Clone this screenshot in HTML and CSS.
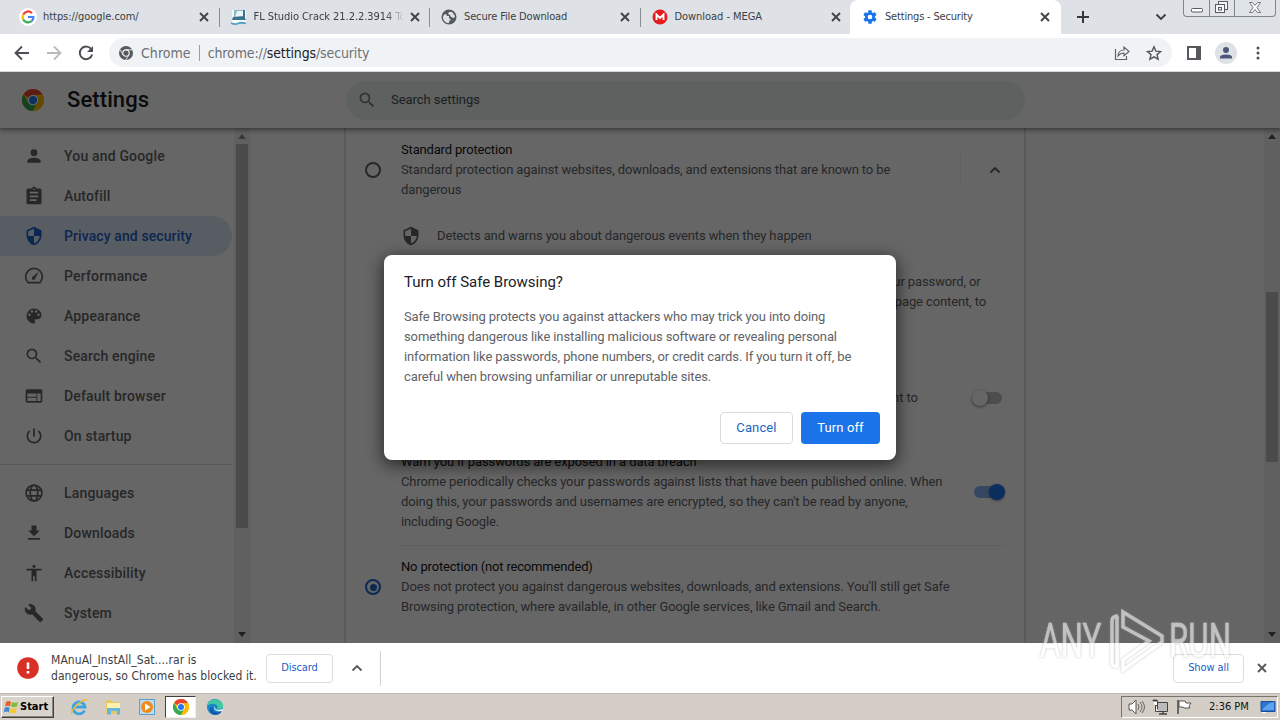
FILE: index.html
```html
<!DOCTYPE html>
<html lang="en">
<head>
<meta charset="utf-8">
<title>Settings - Security</title>
<link rel="stylesheet" href="styles.css">
</head>
<body>
<svg class="defs" width="0" height="0">
  <symbol id="close" viewBox="0 0 10 10"><path d="M1 1l8 8M9 1l-8 8" fill="none" stroke="currentColor" stroke-width="1.9"/></symbol>
  <symbol id="chrome" viewBox="0 0 24 24"><circle cx="12" cy="12" r="12" fill="#fbbc05"/><path d="M12 12L1.6 6A12 12 0 0 1 22.4 6L12 6.6z" fill="#ea4335"/><path d="M1.6 6A12 12 0 0 0 12 24l5-9.2-5-2.8-5.2 3z" fill="#34a853"/><path d="M12 6.5h10.7A12 12 0 0 1 12 24l4.8-9z" fill="#fbbc05"/><circle cx="12" cy="12" r="5.7" fill="#fff"/><circle cx="12" cy="12" r="4.5" fill="#2878ed"/></symbol>
  <symbol id="search" viewBox="0 0 24 24"><path d="M15.5 14h-.79l-.28-.27A6.47 6.47 0 0 0 16 9.5 6.5 6.5 0 1 0 9.5 16c1.61 0 3.09-.59 4.23-1.57l.27.28v.79l5 4.99L20.49 19l-4.99-5zm-6 0C7.01 14 5 11.99 5 9.5S7.01 5 9.5 5 14 7.01 14 9.5 11.99 14 9.5 14z"/></symbol>
  <symbol id="shield" viewBox="0 0 24 24"><path d="M12 1L3 5v6c0 5.55 3.84 10.74 9 12 5.16-1.26 9-6.45 9-12V5l-9-4zm0 10.99h7c-.53 4.12-3.28 7.79-7 8.94V12H5V6.3l7-3.11v8.8z"/></symbol>
  <symbol id="up" viewBox="0 0 12 8"><path d="M1.5 6.5L6 2l4.500 4.500" fill="none" stroke="currentColor" stroke-width="1.800"/></symbol>
</svg>

<header class="tabs">
  <div class="tab"><svg class="fav" viewBox="0 0 18 18"><circle cx="9" cy="9" r="9" fill="#fff"/><g fill="none" stroke-width="2.200"><path d="M13 5.200A5.400 5.400 0 0 0 4.200 6.500" stroke="#ea4335"/><path d="M4.200 6.500a5.400 5.400 0 0 0 0 5" stroke="#fbbc05"/><path d="M4.200 11.500a5.400 5.400 0 0 0 8.500 1.500" stroke="#34a853"/><path d="M12.700 13a5.400 5.400 0 0 0 1.700-4H9" stroke="#4285f4"/></g></svg><span class="title t1">https://google.com/</span><svg class="x"><use href="#close"/></svg></div>
  <div class="tab sep"><svg class="fav" viewBox="0 0 18 18"><path d="M2 2h14v13H2z" fill="#f5fafc"/><path d="M4 2h11v8H4z" fill="#8cb9c9"/><path d="M7 3h7v6H5z" fill="#e7f4fa"/><path d="M13 2h2v9h-2zM3 9l11-1 2 4H2z" fill="#3c718b"/><path d="M1 15q4 2 7 .5t8 0" fill="none" stroke="#54a1bb" stroke-width="1.800"/></svg><span class="title t2">FL Studio Crack 21.2.2.3914 To</span><svg class="x"><use href="#close"/></svg></div>
  <div class="tab sep"><svg class="fav" viewBox="0 0 18 18"><circle cx="9" cy="9" r="7.500" fill="#555a60"/><path d="M3 9c0-2 2-3 3-3l1 2h2v2l2 2-2 1v2c-3 0-6-2-6-6zM9 4h3l3 4-1 2-3-1-1-2-2-1z" fill="#dee1e6"/></svg><span class="title t3">Secure File Download</span><svg class="x"><use href="#close"/></svg></div>
  <div class="tab sep"><svg class="fav" viewBox="0 0 18 18"><circle cx="9" cy="9" r="7.500" fill="#e51c20"/><path d="M5.500 12V6.500L9 10l3.500-3.500V12" fill="none" stroke="#fff" stroke-width="1.900"/></svg><span class="title t4">Download - MEGA</span><svg class="x"><use href="#close"/></svg></div>
  <div class="tab active"><svg class="fav blue" viewBox="0 0 24 24"><path fill="#1a73e8" d="M19.430 12.980c.04-.32.07-.64.07-.98s-.03-.66-.07-.98l2.110-1.650c.19-.15.24-.42.12-.64l-2-3.460c-.12-.22-.39-.3-.61-.22l-2.490 1c-.52-.4-1.080-.73-1.690-.98l-.38-2.650A.49.49 0 0 0 14 2h-4c-.25 0-.46.18-.49.42l-.38 2.650c-.61.25-1.170.59-1.690.98l-2.490-1c-.23-.09-.49 0-.61.22l-2 3.460c-.13.22-.07.49.12.64l2.110 1.650c-.04.32-.07.65-.07.98s.03.66.07.98l-2.110 1.650c-.19.15-.24.42-.12.64l2 3.460c.12.22.39.3.61.22l2.490-1c.52.4 1.080.73 1.690.98l.38 2.650c.03.24.24.42.49.42h4c.25 0 .46-.18.49-.42l.38-2.650c.61-.25 1.170-.59 1.690-.98l2.490 1c.23.09.49 0 .61-.22l2-3.460c.12-.22.07-.49-.12-.64l-2.110-1.650zM12 15.500a3.500 3.500 0 1 1 0-7 3.500 3.500 0 0 1 0 7z"/></svg><span class="title t5">Settings - Security</span><svg class="x"><use href="#close"/></svg></div>
  <svg class="plus" viewBox="0 0 12 12"><path d="M6 0v12M0 6h12" stroke="#35383c" stroke-width="2"/></svg>
  <svg class="tabsearch" viewBox="0 0 12 8"><path d="M1.500 1.500L6 6l4.500-4.500" fill="none" stroke="#3c4043" stroke-width="1.900"/></svg>
  <div class="winbtns">
    <span class="wb w1"><svg width="25" height="15"><rect x="7.500" y="8.500" width="11" height="3.500" rx="1" fill="#fff" stroke="#555b66"/></svg></span>
    <span class="wb w2"><svg width="24" height="15"><g fill="#f4f5f7" stroke="#555b66"><rect x="8.500" y="1.500" width="9" height="8"/><rect x="5.500" y="4.500" width="9" height="8"/><rect x="8.500" y="7.500" width="3" height="2.500"/></g></svg></span>
    <span class="wb w3"><svg width="40" height="15"><path d="M14.500 2.500h3l2.500 3 2.500-3h3l-3.500 5 3.500 5h-3l-2.500-3-2.500 3h-3l3.500-5z" fill="#fff" stroke="#70757e"/></svg></span>
  </div>
</header>

<div class="toolbar">
  <svg class="nav" viewBox="0 0 16 16"><path d="M15 8H2M8 1.500L1.500 8 8 14.500" fill="none" stroke="#4b4f54" stroke-width="1.800"/></svg>
  <svg class="nav" viewBox="0 0 16 16"><path d="M1 8h13M8 1.500L14.500 8 8 14.500" fill="none" stroke="#b8babd" stroke-width="1.800"/></svg>
  <svg class="nav" viewBox="0 0 16 16"><path d="M13.500 4.600A6.300 6.300 0 1 0 14.200 9.500" fill="none" stroke="#4b4f54" stroke-width="1.900"/><path d="M15 1v6H9z" fill="#4b4f54"/></svg>
  <div class="omnibox">
    <svg class="cmono" viewBox="0 0 24 24"><circle cx="12" cy="12" r="12" fill="#565a5f"/><circle cx="12" cy="12" r="5.500" fill="none" stroke="#f1f3f4" stroke-width="2"/><path d="M12 6.500h11M7 15L1.800 6M17 15l-5.500 9" stroke="#f1f3f4" stroke-width="1.500"/></svg>
    <span class="scheme">Chrome</span><i class="pipe"></i><span class="url">chrome://<b>settings</b>/security</span>
    <svg class="share" viewBox="0 0 16 16"><path d="M1.500 4v10.500h11V11M4 11c0-4 3-6 6-6V2l5 4.500-5 4.300V8C7.500 8 5.500 9 4 11z" fill="none" stroke="#5f6368" stroke-width="1.200"/></svg>
    <svg class="star" viewBox="0 0 16 16"><path d="M8 1.800l1.900 4.300 4.700.4-3.600 3.100 1.100 4.600L8 11.800l-4.100 2.400L5 9.600 1.400 6.500l4.700-.4z" fill="none" stroke="#54585d" stroke-width="1.400"/></svg>
  </div>
  <svg class="panel" viewBox="0 0 14 14"><path d="M1 1h12v12H1z" fill="none" stroke="#55585d" stroke-width="2"/><path d="M9 1h4v12H9z" fill="#55585d"/></svg>
  <span class="avatar"><svg viewBox="0 0 14 14"><circle cx="7" cy="4" r="3" fill="#4b587c"/><path d="M1 12.500V11q0-2.500 6-2.500T13 11v1.500z" fill="#4b587c"/></svg></span>
  <svg class="dots" viewBox="0 0 4 14"><g fill="#4b4f54"><circle cx="2" cy="2" r="1.500"/><circle cx="2" cy="7" r="1.500"/><circle cx="2" cy="12" r="1.500"/></g></svg>
</div>

<div class="page">
  <div class="head">
    <svg class="logo"><use href="#chrome"/></svg><h1>Settings</h1>
    <div class="searchbar"><svg viewBox="0 0 24 24"><use href="#search"/></svg><span>Search settings</span></div>
  </div>
  <div class="body">
    <nav class="side">
      <a><svg viewBox="0 0 24 24"><path d="M12 12a4 4 0 1 0 0-8 4 4 0 0 0 0 8zm0 2c-2.670 0-8 1.340-8 4v2h16v-2c0-2.660-5.330-4-8-4z"/></svg><span>You and Google</span></a>
      <a><svg viewBox="0 0 24 24"><path d="M19 3h-4.180C14.400 1.840 13.300 1 12 1s-2.400.84-2.820 2H5a2 2 0 0 0-2 2v15a2 2 0 0 0 2 2h14a2 2 0 0 0 2-2V5a2 2 0 0 0-2-2zm-7 0a1 1 0 1 1 0 2 1 1 0 0 1 0-2zm3 15H7v-2h8v2zm2-4.500H7v-2h10v2zM17 9H7V7h10v2z"/></svg><span>Autofill</span></a>
      <a class="sel"><svg><use href="#shield"/></svg><span>Privacy and security</span></a>
      <a><svg viewBox="0 0 24 24"><path d="M5 20a10 10 0 1 1 14 0z" fill="none" stroke="#5f6368" stroke-width="2"/><path d="M17.500 7l-4 8a2 2 0 1 1-3-2z"/></svg><span>Performance</span></a>
      <a><svg viewBox="0 0 24 24"><path d="M12 3a9 9 0 0 0 0 18c.83 0 1.500-.67 1.500-1.500 0-.39-.15-.74-.39-1.010-.23-.26-.38-.61-.38-.99 0-.83.67-1.500 1.500-1.500H16a5 5 0 0 0 5-5c0-4.420-4.030-8-9-8zM6.500 12a1.500 1.500 0 1 1 0-3 1.500 1.500 0 0 1 0 3zm3-4a1.500 1.500 0 1 1 0-3 1.500 1.500 0 0 1 0 3zm5 0a1.500 1.500 0 1 1 0-3 1.500 1.500 0 0 1 0 3zm3 4a1.500 1.500 0 1 1 0-3 1.500 1.500 0 0 1 0 3z"/></svg><span>Appearance</span></a>
      <a><svg><use href="#search"/></svg><span>Search engine</span></a>
      <a><svg viewBox="0 0 24 24"><path d="M20 4H4a2 2 0 0 0-2 2v12a2 2 0 0 0 2 2h16a2 2 0 0 0 2-2V6a2 2 0 0 0-2-2zm-5 14H4v-4h11v4zm0-5H4V9h11v4zm5 5h-4V9h4v9z"/></svg><span>Default browser</span></a>
      <a><svg viewBox="0 0 24 24"><path d="M13 3h-2v10h2V3zm4.830 2.170l-1.420 1.420A6.990 6.990 0 1 1 7.580 6.580L6.170 5.170A9 9 0 1 0 17.830 5.170z"/></svg><span>On startup</span></a>
      <hr>
      <a><svg viewBox="0 0 24 24"><g fill="none" stroke="#5f6368" stroke-width="2"><circle cx="12" cy="12" r="9.500"/><ellipse cx="12" cy="12" rx="4.500" ry="9.500"/><path d="M3 8.500h18M3 15.500h18"/></g></svg><span>Languages</span></a>
      <a><svg viewBox="0 0 24 24"><path d="M19 9h-4V3H9v6H5l7 7 7-7zM5 18v2h14v-2H5z"/></svg><span>Downloads</span></a>
      <a><svg viewBox="0 0 24 24"><path d="M12 2a2 2 0 1 1 0 4 2 2 0 0 1 0-4zm9 7h-6v13h-2v-6h-2v6H9V9H3V7h18v2z"/></svg><span>Accessibility</span></a>
      <a><svg viewBox="0 0 24 24"><path d="M22.700 19l-9.100-9.100c.9-2.300.4-5-1.500-6.900-2-2-5-2.400-7.400-1.300L9 6 6 9 1.600 4.700C.4 7.100.9 10.100 2.900 12.100c1.900 1.900 4.600 2.400 6.900 1.500l9.100 9.100c.4.4 1 .4 1.400 0l2.300-2.300c.5-.4.5-1.100.1-1.400z"/></svg><span>System</span></a>
    </nav>
    <div class="sbar sbar-side"><i class="arrow"></i><i class="thumb"></i><i class="arrow down"></i></div>
    <main>
      <section class="card">
        <div class="option first">
          <i class="radio"></i>
          <div class="text"><strong>Standard protection</strong><span>Standard protection against websites, downloads, and extensions that are known to be</span><span>dangerous</span></div>
          <div class="expander"><svg><use href="#up"/></svg></div>
        </div>
        <div class="bullet"><svg><use href="#shield"/></svg><div class="text"><span>Detects and warns you about dangerous events when they happen</span></div></div>
        <div class="bullet two"><svg><use href="#search"/></svg><div class="text"><span>Checks URLs with a list of unsafe sites stored in Chrome. If a site tries to steal your password, or</span><span>when you download a harmful file, Chrome may also send URLs, including bits of page content, to</span><span>Safe Browsing</span></div></div>
        <div class="setting help"><div class="text"><strong>Help improve security on the web for everyone</strong><span>Sends URLs of some pages you visit, limited system information, and some page content to</span><span>Google, to help discover new threats and protect everyone on the web.</span></div><i class="toggle"></i></div>
        <div class="setting warn"><div class="text"><strong class="long">Warn you if passwords are exposed in a data breach</strong><span>Chrome periodically checks your passwords against lists that have been published online. When</span><span>doing this, your passwords and usernames are encrypted, so they can't be read by anyone,</span><span>including Google.</span></div><i class="toggle on"></i></div>
        <div class="option last">
          <i class="radio on"></i>
          <div class="text"><strong>No protection (not recommended)</strong><span>Does not protect you against dangerous websites, downloads, and extensions. You'll still get Safe</span><span>Browsing protection, where available, in other Google services, like Gmail and Search.</span></div>
        </div>
      </section>
    </main>
    <div class="sbar sbar-main"><i class="arrow"></i><i class="thumb"></i><i class="arrow down"></i></div>
  </div>
  <div class="scrim">
    <div class="dialog">
      <h2>Turn off Safe Browsing?</h2>
      <p><span>Safe Browsing protects you against attackers who may trick you into doing</span><span>something dangerous like installing malicious software or revealing personal</span><span>information like passwords, phone numbers, or credit cards. If you turn it off, be</span><span>careful when browsing unfamiliar or unreputable sites.</span></p>
      <div class="actions"><button class="cancel">Cancel</button><button class="primary">Turn off</button></div>
    </div>
  </div>
</div>

<div class="shelf">
  <svg class="warnicon" viewBox="0 0 22 22"><circle cx="11" cy="11" r="10.800" fill="#d93025"/><path d="M11 5.500v6.500M11 14v2.500" stroke="#fff" stroke-width="2.600"/></svg>
  <div class="msg"><span>MAnuAl_InstAll_Sat....rar is</span><span>dangerous, so Chrome has blocked it.</span></div>
  <button class="discard">Discard</button>
  <svg class="more"><use href="#up"/></svg>
  <i class="rule"></i>
  <button class="showall">Show all</button>
  <svg class="shut"><use href="#close"/></svg>
</div>

<footer class="taskbar">
  <button class="start"><svg viewBox="0 0 16 16"><path d="M3 3q3-2 5 0L7 7.500Q5 6 2 7.500z" fill="#e8622c"/><path d="M9 3q3 1.500 6 0l-1 4.500q-3 1.500-6 0z" fill="#7ebc3b"/><path d="M1.700 9q3-2 5 0l-1 4.500q-2-2-5 0z" fill="#418bd0"/><path d="M7.700 9q3 1.500 6 0l-1 4.500q-3 1.500-6 0z" fill="#f8c72c"/></svg><span>Start</span></button>
  <svg class="app" viewBox="0 0 18 18"><path d="M14.500 12.500A6 6 0 1 1 15 9H4" fill="none" stroke="#3aa5e0" stroke-width="2.800"/><path d="M2 16C-1 13 13 0 17 2" fill="none" stroke="#e9bd35" stroke-width="1.500"/></svg>
  <svg class="app" viewBox="0 0 18 18"><path d="M2 2h5l1 2h7v12H2z" fill="#e8c768"/><path d="M3 5h13v6H3z" fill="#fff0b0"/><path d="M3 16.500V10h13v6.500h-3V13H7v3.500z" fill="#67b6de"/></svg>
  <svg class="app" viewBox="0 0 18 18"><path d="M1.500 1.500h15v15h-15z" fill="#b9dcf2" stroke="#5b9ccd"/><circle cx="9" cy="9" r="6" fill="#f18b1a"/><path d="M7 5.500L12.500 9 7 12.500z" fill="#fff"/></svg>
  <span class="pressed"><svg><use href="#chrome"/></svg></span>
  <svg class="app edge" viewBox="0 0 18 18"><circle cx="9" cy="9" r="8" fill="#1687c9"/><path d="M1 8C2 0 15-1 17 7c1 5-5 5-6 3 2-4-5-6-10-2z" fill="#40c8a0"/><path d="M7 9c-2 5 4 7 9 4-2 4-8 5-11 2-3-4 0-6 2-6z" fill="#1259a8"/><path d="M9 8c-1 3 2 5 8 3v2c-5 1-11-1-8-5z" fill="#e7eef2"/></svg>
  <div class="tray">
    <svg class="ti" viewBox="0 0 18 18"><path d="M2 6h3l4-4v14l-4-4H2z" fill="#fff" stroke="#555"/><path d="M11 6q2 3 0 6M13 4q4 5 0 10M15 3q5 6 0 12" fill="none" stroke="#666"/></svg>
    <svg class="ti" viewBox="0 0 18 18"><path d="M6.500 4.500h10v9h-10z" fill="#bbb" stroke="#444"/><path d="M8 16h8M12 14v2" stroke="#444" stroke-width="1.500"/><path d="M1.500 2.500h5v5h-2v6h3" fill="#fff" stroke="#444"/><path d="M3 1v3M5 1v3" stroke="#444"/></svg>
    <svg class="ti" viewBox="0 0 18 18"><path d="M3 2v14" stroke="#444" stroke-width="1.500"/><path d="M4 3h6l1 2h5l-2 3 1 2H9L8 9H4z" fill="#fff" stroke="#555"/></svg>
    <span class="clock">2:36 PM</span>
    <svg class="desk" viewBox="0 0 16 14"><path d="M1 1.500h14v10H1z" fill="#2b75d2" stroke="#1e4f96"/><path d="M2 10Q7 3 14 2v8z" fill="#5da2ec"/><path d="M2 12.500h4" stroke="#fff"/></svg>
  </div>
</footer>

<div class="watermark"><span>ANY</span><svg viewBox="0 0 60 64"><g fill="none" stroke="#fff" stroke-width="3.500"><path d="M14 3L53 27v6L14 61V51L40 32 14 18z"/><path d="M9 7Q3 7 3 12v42q0 4 5 3V7"/></g></svg><span class="run">RUN</span></div>
</body>
</html>
```
FILE: styles.css
```css
* { box-sizing: border-box; }
body { margin: 0; width: 1280px; height: 720px; overflow: hidden; display: flex; flex-direction: column; position: relative; background: #fff; font: 12px/16px "DejaVu Sans Condensed", "DejaVu Sans", sans-serif; font-stretch: condensed; color: #3c4043; }
svg { display: block; flex: none; }
.defs { position: absolute; }
button { font: inherit; padding: 0; margin: 0; }

.tabs { height: 34px; flex: none; background: #dee1e6; display: flex; align-items: center; }
.tab { width: 210.500px; flex: none; height: 34px; display: flex; align-items: center; padding: 0 1.500px 0 19px; position: relative; font-size: 11px; }
.tab.sep::before { content: ""; position: absolute; left: 8px; top: 8px; width: 1px; height: 19px; background: #8a8d92; }
.tab.active { background: #fff; border-radius: 8px 8px 0 0; margin-left: 8px; padding-left: 12px; padding-right: 10.500px; }
.fav { width: 18px; height: 18px; margin-right: 6px; }
.tab .title { flex: 1; min-width: 0; white-space: nowrap; overflow: hidden; letter-spacing: -.05px; }
.tab .t3 { letter-spacing: -.14px; }
.tab .t5 { letter-spacing: -.18px; }
.t2 { mask-image: linear-gradient(90deg, #000 88%, transparent); }
.x { width: 10px; height: 10px; color: #3f4347; margin-left: 6px; }
.fav.blue { width: 16px; height: 16px; margin-right: 7px; }
.plus { width: 12px; height: 12px; margin-left: 16px; }
.tabsearch { width: 12px; height: 8px; margin-left: 66px; }
.winbtns { height: 17px; width: 93px; margin-left: 16px; align-self: flex-start; display: flex; border: 1px solid #7f858f; border-top: 0; border-radius: 0 0 4px 4px; background: #e0e3e8; }
.wb { border-right: 1px solid #7f858f; }
.wb:last-child { border: 0; }

.toolbar { height: 38px; flex: none; border-bottom: 1px solid #d5d7da; display: flex; align-items: center; padding: 0 19px 0 14px; }
.nav { width: 16px; height: 16px; margin-right: 16px; }
.omnibox { height: 29px; width: 1063px; margin-left: -1px; background: #f0f3f5; border-radius: 15px; display: flex; align-items: center; padding: 0 10px; font-size: 14px; color: #6d7074; flex: none; }
.cmono { width: 14px; height: 14px; margin-right: 8px; }
.scheme { letter-spacing: .05px; }
.pipe { width: 1px; height: 16px; background: #9a9da1; margin: 0 8px; }
.url { flex: 1; letter-spacing: -.13px; }
.url b { font-weight: 400; color: #202124; }
.share { width: 16px; height: 16px; margin-right: 16px; }
.star { width: 16px; height: 16px; }
.panel { width: 14px; height: 14px; margin-left: 15px; }
.avatar { width: 22px; height: 22px; border-radius: 50%; background: #dee1e6; display: grid; place-items: center; margin: 0 19px 0 14px; flex: none; }
.avatar svg { width: 14px; height: 14px; }
.dots { width: 4px; height: 14px; }

.page { height: 571px; flex: none; position: relative; display: flex; flex-direction: column; overflow: hidden; font-family: Roboto, sans-serif; font-stretch: normal; }
.head { height: 56px; flex: none; display: flex; align-items: center; padding-left: 22px; background: #fff; box-shadow: 0 1px 5px 1px rgba(0,0,0,.45); position: relative; }
.logo { width: 22px; height: 22px; }
h1 { font: 500 22px/28px Roboto, sans-serif; letter-spacing: .1px; color: #1b1c1e; margin: 0 0 0 23px; width: 279px; }
.searchbar { width: 679px; height: 39px; border-radius: 20px; background: #e9f5f1; display: flex; align-items: center; padding-left: 11px; font-size: 13px; }
.searchbar svg { width: 20px; height: 20px; fill: #74787c; margin-right: 14px; }
.searchbar span { color: #4a4d50; letter-spacing: -.05px; }
.body { flex: 1; min-height: 0; display: flex; }
.side { width: 234px; padding-top: 8px; overflow: hidden; }
.side a { display: flex; align-items: center; height: 40px; padding-left: 24px; width: 232px; font: 500 14px/20px Roboto, sans-serif; letter-spacing: .17px; color: #5f6368; border-radius: 0 20px 20px 0; }
.side a svg { width: 20px; height: 20px; fill: #5f6368; margin-right: 20px; }
.side a.sel { background: #dbe8f8; color: #255fc8; letter-spacing: .1px; }
.side a.sel svg { fill: #2563cc; }
.side hr { width: 232px; height: 1px; border: 0; margin: 8px 0; background: #dcdee0; }
.sbar { width: 16px; background: #f1f1f1; display: flex; flex-direction: column; align-items: center; padding: 6px 0; }
.arrow { border: 4px solid transparent; border-top: 0; border-bottom: 5px solid #505050; }
.sbar-side .arrow:first-child { border-bottom-color: #8c8c8c; }
.arrow.down { transform: rotate(180deg); margin-top: auto; }
.thumb { width: 12px; background: #bcbcbc; }
.sbar-side .thumb { height: 384px; margin-top: 5px; }
.sbar-main .thumb { height: 170px; margin-top: 153px; }
main { flex: 1; padding-left: 94px; overflow: hidden; background: #fdfdfd; }
.card { width: 682px; height: 540px; border: solid #e0e0e0; border-width: 0 2px; padding-top: 12px; background: #fff; font-size: 13px; line-height: 20px; letter-spacing: -.115px; color: #5f6368; }
.text strong, .text span { display: block; font-weight: 400; white-space: nowrap; }
.text strong { color: #151617; letter-spacing: -.17px; }
.text strong.long { letter-spacing: -.1px; }
.option { display: flex; align-items: center; height: 60px; padding-left: 19px; }
.radio { width: 16px; height: 16px; border: 2px solid #5f6368; border-radius: 50%; flex: none; margin-right: 20px; display: grid; place-items: center; }
.radio.on { border-color: #1f66cc; }
.radio.on::after { content: ""; width: 7px; height: 7px; border-radius: 50%; background: #1f66cc; }
.option .text { width: 559px; }
.expander { border-left: 1px solid #efefef; height: 34px; display: flex; align-items: center; padding-left: 28px; color: #5a5d60; }
.expander svg { width: 12px; height: 8px; }
.bullet { display: flex; align-items: center; margin-top: 26px; padding-left: 55px; }
.bullet svg { width: 20px; height: 20px; fill: #5f6368; margin-right: 16px; }
.bullet .text { width: 550px; }
.setting { display: flex; align-items: center; padding-left: 55px; }
.setting .text { width: 570px; }
.help { margin-top: 36px; }
.warn { margin-top: 24px; padding-bottom: 12px; border-bottom: 1px solid #ebebeb; height: 94px; align-items: flex-start; }
.setting.warn { padding-left: 0; margin-left: 55px; width: 605px; }
.toggle { width: 28px; height: 12px; border-radius: 6px; background: #bdc1c6; position: relative; flex: none; }
.toggle::after { content: ""; position: absolute; left: -2px; top: -2px; width: 16px; height: 16px; border-radius: 50%; background: #fff; box-shadow: 0 1px 3px rgba(0,0,0,.5); }
.help .toggle { margin-left: 3px; }
.warn .toggle { margin: 34px 0 0 3px; }
.toggle.on { background: #86b1f2; }
.toggle.on::after { left: 15px; background: #1a73e8; box-shadow: 0 1px 3px rgba(0,0,0,.4); }
.last { margin-top: 11px; }
.scrim { position: absolute; inset: 0; background: rgba(0,0,0,.6); }
.dialog { position: absolute; left: 384px; top: 183px; width: 512px; height: 205px; background: #fff; border-radius: 8px; padding: 17px 16px 16px 20px; box-shadow: 0 4px 16px 2px rgba(0,0,0,.55); }
h2 { font: 400 15px/20px Roboto, sans-serif; letter-spacing: -.02px; margin: 0 0 15px; color: #202124; }
.dialog p { margin: 0 0 25px; font-size: 13px; line-height: 20px; letter-spacing: -.115px; color: #5f6368; }
.dialog p span { display: block; white-space: nowrap; }
.actions { display: flex; justify-content: flex-end; gap: 8px; }
.actions button { height: 32px; border-radius: 4px; font: 400 13px/20px Roboto, sans-serif; letter-spacing: .12px; }
.cancel { width: 73px; border: 1px solid #dadce0; background: #fff; color: #1967c2; }
.primary { width: 79px; border: 0; background: #1a73e8; color: #fff; }

.shelf { height: 50px; flex: none; background: #fff; display: flex; align-items: center; padding: 0 13px 0 17px; }
.warnicon { width: 22px; height: 22px; margin-right: 12px; }
.msg { width: 215px; white-space: nowrap; letter-spacing: .06px; }
.msg span { display: block; }
.shelf button { background: #fff; border: 1px solid #dadce0; border-radius: 4px; height: 29px; color: #1a5fc4; font-size: 11px; letter-spacing: -.1px; }
.discard { width: 67px; }
.more { width: 12px; height: 8px; margin-left: 18px; color: #55585d; }
.rule { width: 1px; height: 35px; background: #cfd1d4; margin-left: 17px; }
.shelf .showall { width: 71px; margin-left: auto; }
.shut { width: 10px; height: 10px; margin-left: 13px; color: #55585d; }

.taskbar { height: 27px; flex: none; background: #d5cec6; border-top: 1px solid #bdb8b2; display: flex; align-items: center; padding: 1px 2px 1px 1px; }
.start { width: 53px; height: 22px; background: #d8d3cb; border: 1px solid; border-color: #fff #404040 #404040 #fff; box-shadow: inset -1px -1px #8a857d; display: flex; align-items: center; font-weight: 700; font-size: 11px; color: #000; padding-left: 1px; gap: 1px; }
.start svg { width: 16px; height: 16px; }
.app { width: 18px; height: 18px; margin-left: 16px; }
.pressed { width: 31px; height: 22px; background: #fff; border: 1px solid; border-color: #404040 #eee #eee #404040; display: grid; place-items: center; margin-left: 9px; }
.pressed svg { width: 16px; height: 16px; }
.app.edge { margin-left: 10px; }
.tray { height: 22px; width: 157px; margin-left: auto; border: 1px solid; border-color: #77736d #fff #fff #77736d; display: flex; align-items: center; padding-left: 5px; color: #111; font-size: 11px; }
.ti { width: 18px; height: 18px; margin-right: 6px; }
.clock { width: 39px; margin: 0 12px 0 10px; white-space: nowrap; }
.desk { width: 16px; height: 14px; }

.watermark { position: absolute; left: 1040px; top: 608px; height: 66px; display: flex; align-items: center; opacity: .6; font: 400 49px/50px Roboto, sans-serif; color: #fff; filter: drop-shadow(0 0 1px #999); }
.watermark svg { width: 60px; height: 64px; margin: 0 0 0 3px; }
.watermark span { transform: scaleX(.64); transform-origin: 0 50%; width: 66px; -webkit-text-stroke: .5px #fff; }
```
